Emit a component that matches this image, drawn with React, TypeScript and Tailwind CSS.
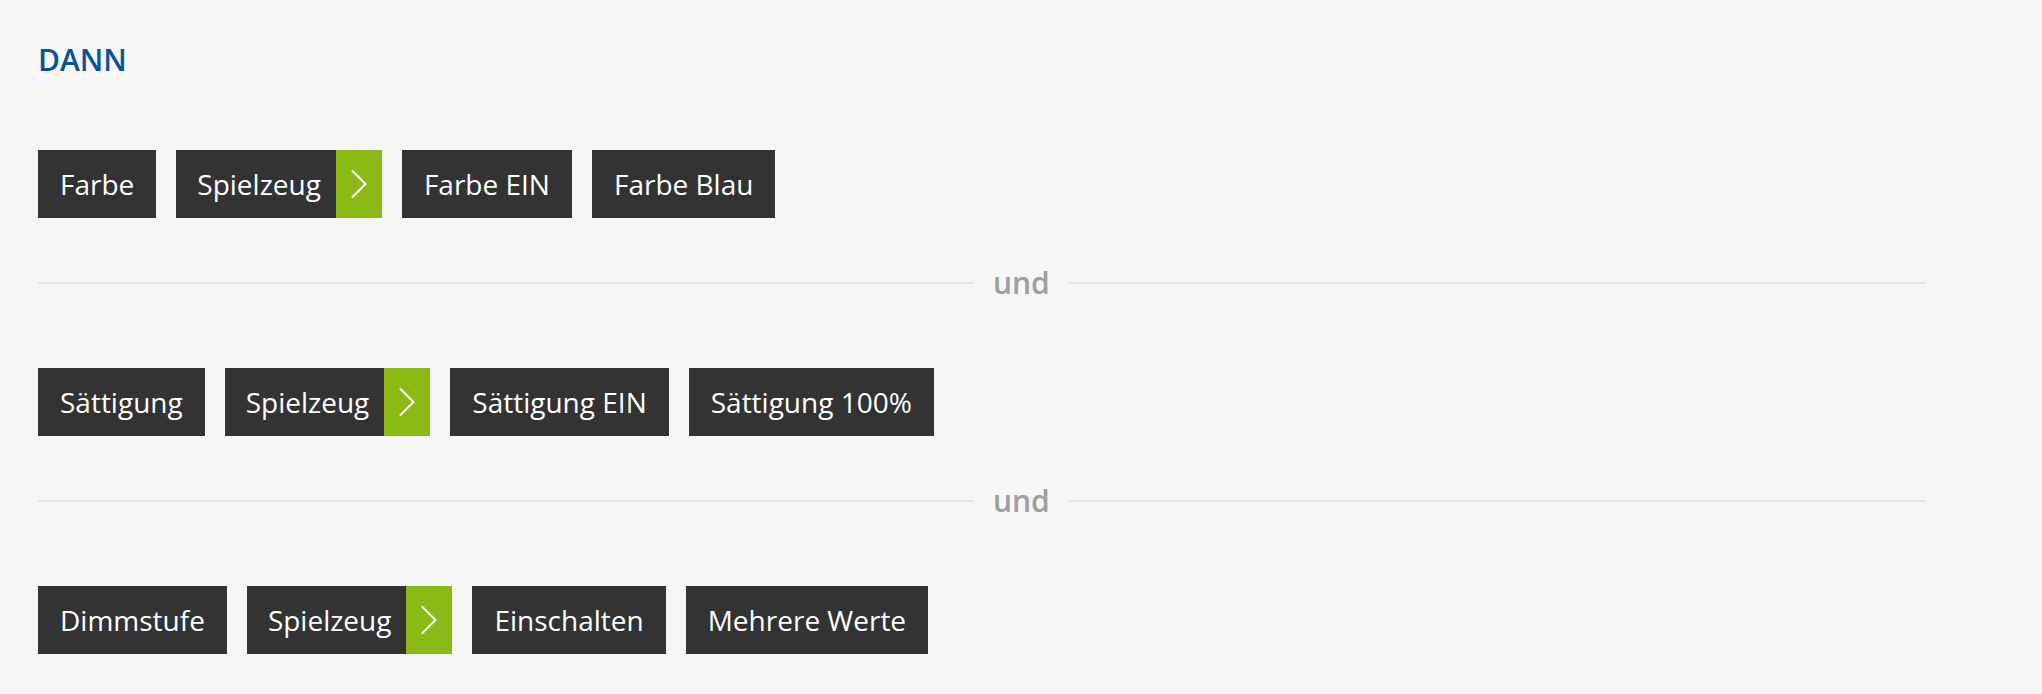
import React from 'react';

type Row = {
  items: string[];
};

const rows: Row[] = [
  { items: ['Farbe', 'Spielzeug', 'Farbe EIN', 'Farbe Blau'] },
  { items: ['Sättigung', 'Spielzeug', 'Sättigung EIN', 'Sättigung 100%'] },
  { items: ['Dimmstufe', 'Spielzeug', 'Einschalten', 'Mehrere Werte'] },
];

const Chevron: React.FC = () => (
  <svg width="16" height="28" viewBox="0 0 16 28" fill="none" className="block">
    <path d="M1.5 1 L14.5 14 L1.5 27" stroke="#ffffff" strokeWidth="2" strokeLinecap="round" strokeLinejoin="round" />
  </svg>
);

const Tag: React.FC<{ label: string }> = ({ label }) => (
  <div className="flex h-[68px] items-center bg-[#333333] px-[22px] text-[28px] text-white">
    {label}
  </div>
);

const DeviceTag: React.FC<{ label: string }> = ({ label }) => (
  <div className="flex h-[68px] bg-[#333333] text-[28px] text-white">
    <div className="flex items-center pl-[21px] pr-[15px]">{label}</div>
    <div className="flex w-[46px] items-center justify-center bg-[#8bb916]">
      <Chevron />
    </div>
  </div>
);

const Divider: React.FC = () => (
  <div className="flex h-[40px] w-[1888px] items-center">
    <div className="h-[2px] w-[936px] bg-[#e4e4e1]" />
    <span className="px-[19px] text-[30px] font-semibold leading-[40px] text-[#9b9fa1]">und</span>
    <div className="h-[2px] flex-1 bg-[#e4e4e1]" />
  </div>
);

export default function App() {
  return (
    <div
      className="min-h-[694px] w-full bg-[#f6f6f4] pl-[38px] pt-[40px]"
      style={{ fontFamily: '"Open Sans", "Noto Sans", sans-serif' }}
    >
      <h2 className="text-[30px] font-semibold leading-[40px] text-[#0b4f9f]">DANN</h2>
      <div className="mt-[70px] flex flex-col">
        {rows.map((row, i) => (
          <React.Fragment key={i}>
            <div className="flex gap-[20px]">
              {row.items.map((item, j) =>
                j === 1 ? <DeviceTag key={j} label={item} /> : <Tag key={j} label={item} />
              )}
            </div>
            {i < rows.length - 1 && (
              <div className="mb-[65px] mt-[45px]">
                <Divider />
              </div>
            )}
          </React.Fragment>
        ))}
      </div>
    </div>
  );
}
